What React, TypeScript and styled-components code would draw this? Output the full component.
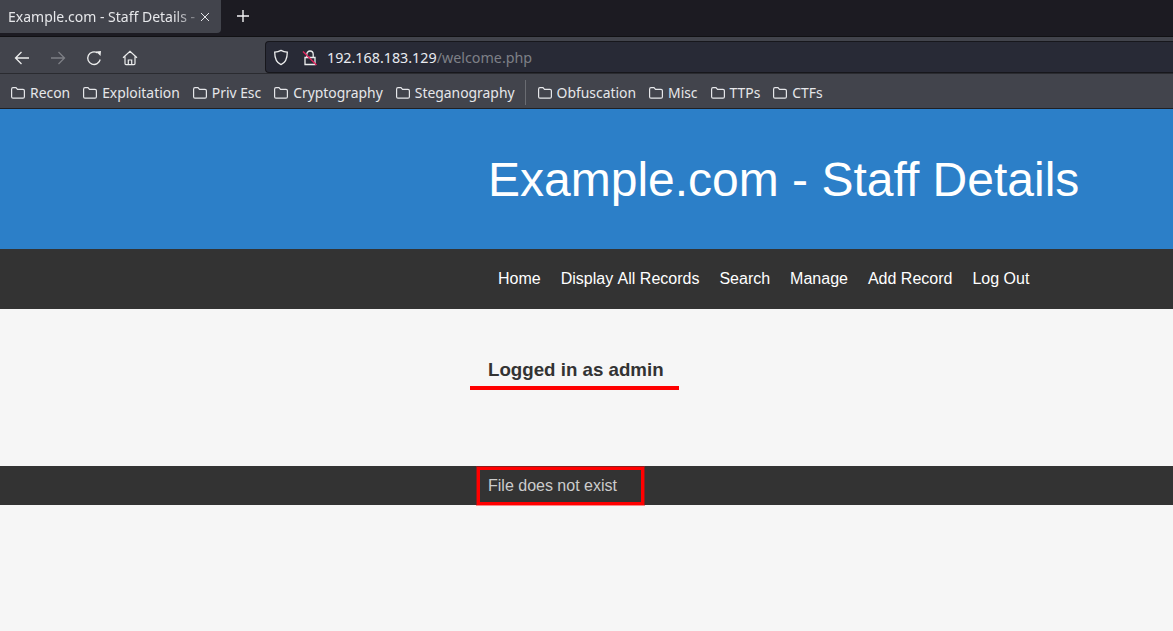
import styled, { createGlobalStyle } from 'styled-components'

const GlobalStyle = createGlobalStyle`
  html, body {
    margin: 0;
    padding: 0;
    background: #f6f6f6;
  }
  body {
    height: 631px;
    overflow: hidden;
  }
`

const bookmarks = ['Recon', 'Exploitation', 'Priv Esc', 'Cryptography', 'Steganography']
const moreBookmarks = ['Obfuscation', 'Misc', 'TTPs', 'CTFs']
const navLinks = ['Home', 'Display All Records', 'Search', 'Manage', 'Add Record', 'Log Out']

const Folder = () => (
  <svg width="16" height="16" viewBox="0 0 16 16" fill="none" stroke="#e6e7ea" strokeWidth="1.2">
    <path d="M1.600 4.200c0-.9.6-1.500 1.400-1.500h3l1.500 1.600h5.500c.9 0 1.400.6 1.400 1.400v6c0 .9-.6 1.500-1.400 1.500H3c-.9 0-1.400-.6-1.400-1.500z" />
  </svg>
)

const App = () => {
  return (
    <>
      <GlobalStyle />
      <Browser>
        <TabStrip>
          <Tab>
            <TabTitle>Example.com - Staff Details -</TabTitle>
            <svg width="10" height="10" viewBox="0 0 10 10" stroke="#e4e5e8" strokeWidth="1">
              <path d="M1 1l8 8M9 1l-8 8" />
            </svg>
          </Tab>
          <NewTab>
            <svg width="14" height="14" viewBox="0 0 14 14" stroke="#f4f4f6" strokeWidth="1.4">
              <path d="M7 1v12M1 7h12" />
            </svg>
          </NewTab>
        </TabStrip>
        <Toolbar>
          <NavIcons>
            <svg width="16" height="16" viewBox="0 0 16 16" fill="none" stroke="#eceded" strokeWidth="1.3">
              <path d="M15 8H1.500M7.500 2L1.500 8l6 6" />
            </svg>
            <svg width="16" height="16" viewBox="0 0 16 16" fill="none" stroke="#7d7f85" strokeWidth="1.3">
              <path d="M1 8h13.500M8.500 2l6 6-6 6" />
            </svg>
            <svg width="16" height="16" viewBox="0 0 16 16" fill="none" stroke="#eceded" strokeWidth="1.3">
              <path d="M14.200 9.500A6.300 6.300 0 1 1 11.500 2.900" />
              <path d="M10 1.500L15 1L14.500 6z" fill="#eceded" stroke="none" />
            </svg>
            <svg width="16" height="16" viewBox="0 0 16 16" fill="none" stroke="#eceded" strokeWidth="1.2">
              <path d="M1 7.800L8 1.400l7 6.400M3 6.400v7.200c0 .6.4 1 1 1h8c.6 0 1-.4 1-1V6.400M6.300 14.600V10h3.400v4.600" />
            </svg>
          </NavIcons>
          <UrlBar>
            <svg width="16" height="17" viewBox="0 0 16 17" fill="none" stroke="#eceded" strokeWidth="1.3">
              <path d="M8 1.400c2 1.200 4 1.700 6.300 1.800 0 6-1.600 10.400-6.300 12.400C3.300 13.600 1.700 9.200 1.700 3.200 4 3.100 6 2.600 8 1.400z" />
            </svg>
            <svg width="16" height="17" viewBox="0 0 16 17" fill="none">
              <path d="M4.800 8V5.200a3.200 3.200 0 0 1 6.400 0V8M3 8.500h10v7H3z" stroke="#eceded" strokeWidth="1.3" />
              <path d="M1 2.500L14.500 16" stroke="#e0245e" strokeWidth="1.400" />
            </svg>
            <Url>
              192.168.183.129<UrlPath>/welcome.php</UrlPath>
            </Url>
          </UrlBar>
        </Toolbar>
        <BookmarkBar>
          {bookmarks.map((b) => (
            <Bookmark key={b}>
              <Folder />
              {b}
            </Bookmark>
          ))}
          <Separator />
          {moreBookmarks.map((b) => (
            <Bookmark key={b}>
              <Folder />
              {b}
            </Bookmark>
          ))}
        </BookmarkBar>
      </Browser>
      <Header>
        <Title>Example.com - Staff Details</Title>
      </Header>
      <Nav>
        {navLinks.map((l) => (
          <NavLink key={l}>{l}</NavLink>
        ))}
      </Nav>
      <Main>
        <LoggedIn>Logged in as admin</LoggedIn>
        <Underline />
      </Main>
      <Footer>
        <FooterText>File does not exist</FooterText>
        <Highlight />
      </Footer>
    </>
  )
}

export default App

const Browser = styled.div`
  font-family: 'Noto Sans', sans-serif;
  background: #42444c;
  height: 109px;
`
const TabStrip = styled.div`
  display: flex;
  align-items: flex-start;
  height: 37px;
  background: #1c1b22;
  border-bottom: 1px solid #111114;
  box-sizing: border-box;
`
const Tab = styled.div`
  display: flex;
  align-items: center;
  justify-content: space-between;
  width: 221px;
  height: 33px;
  padding: 0 11px 0 8px;
  box-sizing: border-box;
  background: #42444c;
  border-radius: 0 0 4px 0;
`
const TabTitle = styled.span`
  font-size: 14px;
  color: #e6e7ea;
  white-space: nowrap;
  overflow: hidden;
  mask-image: linear-gradient(to right, #000 165px, rgba(0, 0, 0, 0.25) 190px);
`
const NewTab = styled.div`
  display: flex;
  align-items: center;
  margin: 9px 0 0 15px;
`
const Toolbar = styled.div`
  display: flex;
  align-items: center;
  height: 36px;
  padding-top: 4px;
  box-sizing: border-box;
`
const NavIcons = styled.div`
  display: flex;
  align-items: center;
  gap: 20px;
  padding: 2px 0 0 14px;
  width: 265px;
  box-sizing: border-box;
`
const UrlBar = styled.div`
  display: flex;
  align-items: center;
  gap: 13px;
  flex: 1;
  height: 32px;
  padding-left: 7px;
  background: #282a36;
  border: 1px solid #17171c;
  border-right: none;
  border-radius: 4px 0 0 4px;
  box-sizing: border-box;
`
const Url = styled.span`
  font-size: 14.3px;
  color: #e9ebf0;
  margin-left: -4px;
`
const UrlPath = styled.span`
  color: #7e8087;
`
const BookmarkBar = styled.div`
  display: flex;
  align-items: center;
  height: 36px;
  padding: 3px 0 0 10px;
  box-sizing: border-box;
  border-top: 1px solid #2a2b30;
  border-bottom: 1px solid #1f2024;
`
const Bookmark = styled.div`
  display: flex;
  align-items: center;
  gap: 4px;
  margin-right: 12px;
  font-size: 13.9px;
  color: #e6e7ea;
  white-space: nowrap;
`
const Separator = styled.div`
  width: 1px;
  height: 25px;
  background: #6a6c72;
  margin: 0 11px 0 -2px;
`
const Header = styled.header`
  display: flex;
  align-items: center;
  height: 140px;
  padding-left: 488px;
  background: #2c7fc8;
  box-sizing: border-box;
`
const Title = styled.h1`
  margin: 0;
  font-family: 'Liberation Sans', Arial, sans-serif;
  font-size: 48px;
  font-weight: 400;
  color: #fff;
`
const Nav = styled.nav`
  display: flex;
  align-items: center;
  gap: 20px;
  height: 60px;
  padding-left: 498px;
  background: #333;
  box-sizing: border-box;
`
const NavLink = styled.a`
  font-family: 'Liberation Sans', Arial, sans-serif;
  font-size: 16px;
  font-kerning: none;
  color: #fff;
`
const Main = styled.main`
  position: relative;
  height: 157px;
  padding: 50px 0 0 488px;
  background: #f6f6f6;
  box-sizing: border-box;
`
const LoggedIn = styled.h3`
  margin: 0;
  font-family: 'Liberation Sans', Arial, sans-serif;
  font-size: 18.72px;
  font-weight: 700;
  color: #333;
`
const Underline = styled.div`
  position: absolute;
  left: 470px;
  top: 77px;
  width: 209px;
  height: 4px;
  background: #f00;
`
const Footer = styled.footer`
  position: relative;
  display: flex;
  align-items: center;
  height: 39px;
  padding-left: 488px;
  background: #333;
  box-sizing: border-box;
`
const FooterText = styled.span`
  font-family: 'Liberation Sans', Arial, sans-serif;
  font-size: 16px;
  color: #ccc;
`
const Highlight = styled.div`
  position: absolute;
  left: 477px;
  top: 1px;
  width: 167px;
  height: 38px;
  border: 3px solid #f00;
  box-shadow: 0 0 0 1px rgba(255, 0, 0, 0.45);
  box-sizing: border-box;
`
